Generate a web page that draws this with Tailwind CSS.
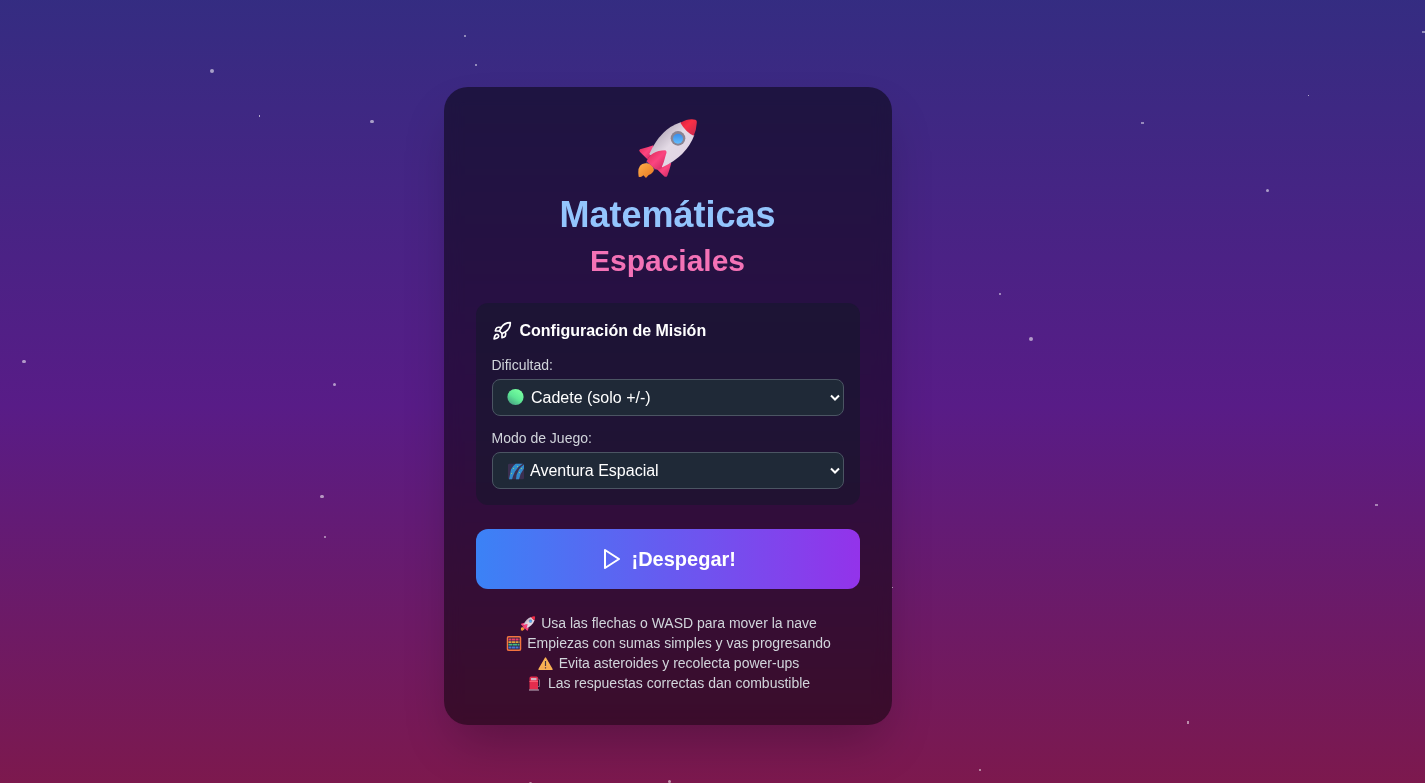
<!DOCTYPE html>
<html lang="es">
<head>
<meta charset="utf-8">
<title>Matemáticas Espaciales</title>
<script src="https://cdn.jsdelivr.net/npm/@tailwindcss/browser@4"></script>
</head>
<body class="h-[783px] overflow-hidden bg-[#831843] font-['Liberation_Sans',Arial,sans-serif] text-white">
<svg class="absolute size-0">
  <defs>
    <linearGradient id="hull" x1="0" y1="0" x2="1" y2="1"><stop offset=".2" stop-color="#b5aaba"/><stop offset=".48" stop-color="#e3dae5"/><stop offset="1" stop-color="#e0d0e4"/></linearGradient>
    <linearGradient id="nose" x1="0" y1="0" x2="1" y2="1"><stop offset="0" stop-color="#d41e3e"/><stop offset=".4" stop-color="#fa3045"/><stop offset="1" stop-color="#c32950"/></linearGradient>
    <linearGradient id="fin" x1="0" y1="0" x2="1" y2="1"><stop offset="0" stop-color="#d92652"/><stop offset=".5" stop-color="#fb4580"/><stop offset="1" stop-color="#c92460"/></linearGradient>
    <linearGradient id="flame" x1="0" y1="0" x2="1" y2="1"><stop offset="0" stop-color="#ffae4a"/><stop offset="1" stop-color="#e97921"/></linearGradient>
    <linearGradient id="glass" x1="0" y1="0" x2="0" y2="1"><stop offset="0" stop-color="#3b8ce8"/><stop offset="1" stop-color="#62bdff"/></linearGradient>
    <linearGradient id="green" x1=".8" y1=".1" x2=".2" y2="1"><stop offset="0" stop-color="#78ffa0"/><stop offset=".5" stop-color="#5de795"/><stop offset="1" stop-color="#479e82"/></linearGradient>
    <linearGradient id="warn" x1="0" y1="0" x2="0" y2="1"><stop offset="0" stop-color="#ffc95a"/><stop offset="1" stop-color="#f5a34e"/></linearGradient>
    <linearGradient id="milky" x1="0" y1="0" x2="1" y2="1"><stop offset="0" stop-color="#2a94d6"/><stop offset="1" stop-color="#3b7fc0"/></linearGradient>
    <symbol id="rocket" viewBox="54 36 180 180">
      <path d="M80 163 L106 188 L98 198 L76 180Z" fill="#433a73"/>
      <path d="M56 212 Q50 174 76 172 Q86 170 94 178 Q106 188 99 198 Q92 207 86 207 L78 216 L70 208 Q64 216 56 212Z" fill="url(#flame)"/>
      <path d="M100 118 Q84 124 60 130 Q55 133 60 138 L82 160 L98 140Z" fill="url(#fin)"/>
      <path d="M154 170 Q148 194 142 209 Q138 216 131 209 L108 187 L126 178Z" fill="url(#fin)"/>
      <path d="M182 49 Q122 68 88 144 L127 184 Q200 150 223 87Z" fill="url(#hull)"/>
      <path d="M181 50 Q206 36 226 41 Q232 43 230 53 Q229 73 221 89 Q198 79 181 50Z" fill="url(#nose)"/>
      <path d="M80 166 Q92 134 136 133 Q142 136 138 145 Q132 170 124 187 Q110 194 104 188Z" fill="url(#fin)"/>
      <circle cx="174" cy="97" r="22" fill="#8b8492"/>
      <circle cx="174" cy="98" r="15" fill="url(#glass)"/>
    </symbol>
  </defs>
</svg>
<div class="relative flex h-[812px] w-full items-center overflow-hidden bg-linear-to-b/srgb from-[#312e81] from-[-5%] via-[#581c87] via-50% to-[#831843] to-[105%] pl-[444px]">
  <!-- stars -->
  <div class="absolute inset-0">
    <i class="absolute left-[210px] top-[69px] size-1 rounded-full bg-white/55"></i>
    <i class="absolute left-[259px] top-[115px] h-0.5 w-px bg-white/60"></i>
    <i class="absolute left-[370px] top-[120px] h-[3px] w-1 rounded-full bg-white/55"></i>
    <i class="absolute left-[464px] top-[35px] size-0.5 bg-white/45"></i>
    <i class="absolute left-[475px] top-[64px] size-0.5 bg-white/45"></i>
    <i class="absolute left-[22px] top-[360px] h-[3px] w-1 rounded-full bg-white/55"></i>
    <i class="absolute left-[333px] top-[383px] size-[3px] rounded-full bg-white/55"></i>
    <i class="absolute left-[1422px] top-[31px] h-0.5 w-[3px] bg-white/45"></i>
    <i class="absolute left-[1141px] top-[122px] h-0.5 w-[3px] bg-white/45"></i>
    <i class="absolute left-[1308px] top-[95px] size-px bg-white/60"></i>
    <i class="absolute left-[1266px] top-[189px] size-[3px] rounded-full bg-white/55"></i>
    <i class="absolute left-[999px] top-[293px] size-0.5 bg-white/45"></i>
    <i class="absolute left-[1029px] top-[337px] size-1 rounded-full bg-white/55"></i>
    <i class="absolute left-[320px] top-[495px] h-[3px] w-1 rounded-full bg-white/55"></i>
    <i class="absolute left-[324px] top-[536px] size-0.5 bg-white/45"></i>
    <i class="absolute left-[1375px] top-[504px] h-0.5 w-[3px] bg-white/45"></i>
    <i class="absolute left-[892px] top-[587px] size-px bg-white/60"></i>
    <i class="absolute left-[1187px] top-[721px] h-[3px] w-0.5 bg-white/50"></i>
    <i class="absolute left-[979px] top-[769px] size-0.5 bg-white/45"></i>
    <i class="absolute left-[529px] top-[782px] size-[3px] rounded-full bg-white/50"></i>
    <i class="absolute left-[668px] top-[780px] size-[3px] rounded-full bg-white/55"></i>
  </div>

  <main class="relative w-[448px] rounded-3xl bg-black/50 p-8 text-center shadow-2xl backdrop-blur-sm">
    <div class="mb-4 flex h-[60px] justify-center"><svg class="-mt-px size-[60px]"><use href="#rocket"/></svg></div>
    <h1 class="mb-2 pr-px text-4xl font-bold text-[#93c5fd]">Matemáticas</h1>
    <h2 class="mb-6 pr-px text-3xl font-bold text-[#f472b6]">Espaciales</h2>

    <section class="mb-6 rounded-xl bg-[#111827]/50 p-4 text-left">
      <h3 class="mb-3 flex items-center gap-2 font-bold">
        <svg class="size-5" viewBox="0 0 24 24" fill="none" stroke="currentColor" stroke-width="2" stroke-linecap="round" stroke-linejoin="round"><path d="M4.500 16.500c-1.500 1.260-2 5-2 5s3.740-.500 5-2c.710-.840.700-2.130-.090-2.910a2.180 2.180 0 0 0-2.910-.090z"/><path d="m12 15-3-3a22 22 0 0 1 2-3.950A12.880 12.880 0 0 1 22 2c0 2.720-.780 7.500-6 11a22.350 22.350 0 0 1-4 2z"/><path d="M9 12H4s.550-3.030 2-4c1.620-1.080 5 0 5 0"/><path d="M12 15v5s3.030-.550 4-2c1.080-1.620 0-5 0-5"/></svg>
        <span class="-ml-[0.5px]">Configuración de Misión</span>
      </h3>
      <div class="mb-1 -ml-[0.5px] text-sm text-[#d1d5db]">Dificultad:</div>
      <div class="mb-3 flex h-[37px] items-center rounded-lg border border-[#4b5563] bg-[#1f2937] pl-3.5 pr-[3px]">
        <svg class="mr-[7px] size-[17px] -translate-y-[0.5px]" viewBox="0 0 17 17"><circle cx="8.500" cy="8.500" r="8.100" fill="url(#green)"/></svg>
        <span>Cadete (solo +/-)</span>
        <svg class="ml-auto size-2.5 -translate-y-[0.5px]" viewBox="0 0 10 10" fill="none" stroke="white" stroke-width="2"><path d="M1 3l4 4 4-4"/></svg>
      </div>
      <div class="mb-1 -ml-[0.5px] text-sm text-[#d1d5db]">Modo de Juego:</div>
      <div class="flex h-[37px] items-center rounded-lg border border-[#4b5563] bg-[#1f2937] pl-[15px] pr-[3px]">
        <svg class="mr-1.5 size-4 translate-y-[0.5px]" viewBox="0 0 16 16"><rect width="16" height="16" rx="1.500" fill="#3b2f50"/><path d="M1 16Q2 11 3 6Q5 2 8 0H15Q10 3 7 8Q5 12 4 16Z" fill="url(#milky)"/><path d="M8 16Q8 11 11 6Q13 3 16 1V5Q12 10 11 16Z" fill="url(#milky)"/><path d="M5 5h1M9 3h1M3 10h1M11 9h1M13 5h1" stroke="#8cc878"/></svg>
        <span>Aventura Espacial</span>
        <svg class="ml-auto size-2.5 -translate-y-[0.5px]" viewBox="0 0 10 10" fill="none" stroke="white" stroke-width="2"><path d="M1 3l4 4 4-4"/></svg>
      </div>
    </section>

    <button class="mb-6 flex w-full items-center justify-center gap-2 rounded-xl bg-linear-to-r/srgb from-[#3b82f6] to-[#9333ea] py-4 text-xl font-bold">
      <svg class="size-6" viewBox="0 0 24 24" fill="none" stroke="currentColor" stroke-width="2" stroke-linecap="round" stroke-linejoin="round"><polygon points="5 3 19 12 5 21 5 3"/></svg>
      <span class="-ml-[0.5px]">¡Despegar!</span>
    </button>

    <div class="pl-px text-sm text-[#d1d5db]">
      <p class="flex items-center justify-center gap-1.5"><svg class="size-[15px] translate-x-[0.5px]"><use href="#rocket"/></svg>Usa las flechas o WASD para mover la nave</p>
      <p class="flex items-center justify-center gap-1.5"><svg class="size-[15px] translate-x-[0.5px]" viewBox="0 0 15 15"><rect x=".8" y=".8" width="13.400" height="13.400" rx="1.500" fill="#322344" stroke="#f4743f" stroke-width="1.600"/><path d="M2 3.500h11" stroke="#ea3d66" stroke-width="2" stroke-dasharray="3 .5"/><path d="M2 6.200h11" stroke="#e6a340" stroke-width="1.700" stroke-dasharray="3 .5"/><path d="M2 8.700h11" stroke="#42ba80" stroke-width="1.700" stroke-dasharray="4 .5"/><path d="M2 11.500h11" stroke="#4979d8" stroke-width="2" stroke-dasharray="3 .5"/></svg>Empiezas con sumas simples y vas progresando</p>
      <p class="flex items-center justify-center gap-1.5"><svg class="size-[15px]" viewBox="0 0 15 15"><path d="M7.500 2L14 13.300H1Z" fill="url(#warn)" stroke="#f9b355" stroke-width="1.400" stroke-linejoin="round"/><path d="M7.500 5v5M7.500 11.200v1.300" stroke="#493342" stroke-width="1.200"/></svg>Evita asteroides y recolecta power-ups</p>
      <p class="flex items-center justify-center gap-1.5"><svg class="size-[15px]" viewBox="0 0 15 15"><path d="M2.500 2Q2.500 .5 4 .5H9.500Q11 .5 11 2V13.500H2.500Z" fill="#e32d4d"/><path d="M4 2h5.500v2.300h-5.500z" fill="#d0b4c1"/><path d="M2.500 5.500h8.500" stroke="#f95d70"/><path d="M2 14h10" stroke="#c3b5c3" stroke-width="1"/><path d="M11 2.500l1.500 1.500V10.500h-1.500" fill="none" stroke="#79697f"/></svg>Las respuestas correctas dan combustible</p>
    </div>
  </main>
</div>
</body>
</html>
